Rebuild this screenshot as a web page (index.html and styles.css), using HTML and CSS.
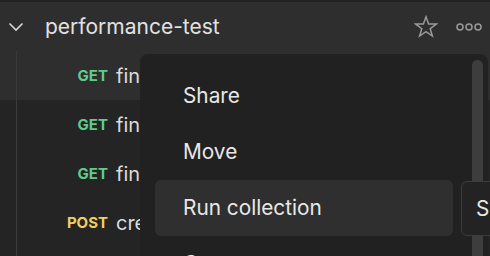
FILE: index.html
```html
<!DOCTYPE html>
<html>
<head>
<meta charset="utf-8">
<link rel="stylesheet" href="styles.css">
</head>
<body>
<div class="sidebar">
  <div class="topstrip"></div>
  <div class="hover-zone">
    <div class="header">
      <svg class="chevron" width="16" height="10" viewBox="0 0 16 10"><path d="M1.5 1.5 L8 8 L14.5 1.5" fill="none" stroke="#d8d8d8" stroke-width="1.6"/></svg>
      <span class="title">performance-test</span>
      <svg class="star" width="24" height="24" viewBox="0 0 24 24"><path d="M12 1.8 L14.6 9 L22.2 9.1 L16.2 13.7 L18.4 21 L12 16.7 L5.6 21 L7.8 13.7 L1.8 9.1 L9.4 9 Z" fill="none" stroke="#9a9a9a" stroke-width="1.5" stroke-linejoin="miter"/></svg>
      <svg class="dots" width="26" height="8" viewBox="0 0 26 8"><circle cx="4" cy="4" r="3" fill="none" stroke="#9a9a9a" stroke-width="1.5"/><circle cx="13" cy="4" r="3" fill="none" stroke="#9a9a9a" stroke-width="1.5"/><circle cx="22" cy="4" r="3" fill="none" stroke="#9a9a9a" stroke-width="1.5"/></svg>
    </div>
    <div class="row"><span class="method get">GET</span><span class="name">find</span></div>
  </div>
  <div class="rows">
    <div class="row"><span class="method get">GET</span><span class="name">find</span></div>
    <div class="row"><span class="method get">GET</span><span class="name">find</span></div>
    <div class="row"><span class="method post">POST</span><span class="name">create</span></div>
  </div>
  <div class="guide"></div>

  <div class="menu">
    <div class="item">Share</div>
    <div class="item">Move</div>
    <div class="item active">Run collection</div>
    <div class="item">Generate tests</div>
    <div class="scrollbar"></div>
  </div>
  <div class="submenu">Schedule</div>
</div>
</body>
</html>
```
FILE: styles.css
```css
html, body {
  margin: 0;
  padding: 0;
  background: #242424;
  width: 490px;
  height: 256px;
  overflow: hidden;
  font-family: Inter, "Noto Sans", sans-serif;
}
.sidebar {
  position: relative;
  width: 490px;
  height: 256px;
  overflow: hidden;
  background: #242424;
}
.topstrip {
  height: 2px;
  background: #212121;
}
.hover-zone {
  background: #2e2e2e;
}
.header {
  height: 49px;
  display: flex;
  align-items: center;
  padding-left: 8px;
  padding-right: 8px;
}
.chevron {
  margin-top: 1px;
}
.title {
  margin-left: 21px;
  font-size: 21px;
  color: #e2e2e2;
  flex: 1;
  margin-top: -1px;
}
.star {
  margin-right: 18px;
  margin-top: 1px;
}
.dots {
  margin-top: 1px;
}
.row {
  height: 49px;
  display: flex;
  align-items: center;
}
.method {
  width: 116px;
  text-align: right;
  font-size: 15px;
  font-weight: 700;
  padding-right: 8px;
  box-sizing: border-box;
}
.method.get { color: #5fcc8e; }
.method.post { color: #f2cf62; }
.name {
  font-size: 20px;
  color: #dcdcdc;
}
.guide {
  position: absolute;
  left: 16px;
  top: 51px;
  bottom: 0;
  width: 1px;
  background: #3a3a3a;
}
.menu {
  position: absolute;
  left: 140px;
  top: 54px;
  width: 348px;
  height: 240px;
  background: #212121;
  border-radius: 8px;
  padding: 14px 0 0 15px;
  box-sizing: border-box;
}
.item {
  width: 298px;
  height: 56px;
  display: flex;
  align-items: center;
  padding-left: 28px;
  padding-bottom: 1px;
  box-sizing: border-box;
  font-size: 20.8px;
  color: #e8e8e8;
  border-radius: 6px;
  white-space: nowrap;
}
.item.active {
  background: #2f2f2f;
}
.scrollbar {
  position: absolute;
  left: 332px;
  top: 6px;
  width: 11px;
  height: 240px;
  border-radius: 6px;
  background: #3d3d3d;
}
.submenu {
  position: absolute;
  left: 461px;
  top: 181px;
  width: 120px;
  height: 55px;
  box-sizing: border-box;
  background: #232323;
  border: 1px solid #3c3c3c;
  border-radius: 6px;
  padding-left: 14px;
  padding-bottom: 1px;
  display: flex;
  align-items: center;
  font-size: 20.8px;
  color: #e8e8e8;
  white-space: nowrap;
}
```
